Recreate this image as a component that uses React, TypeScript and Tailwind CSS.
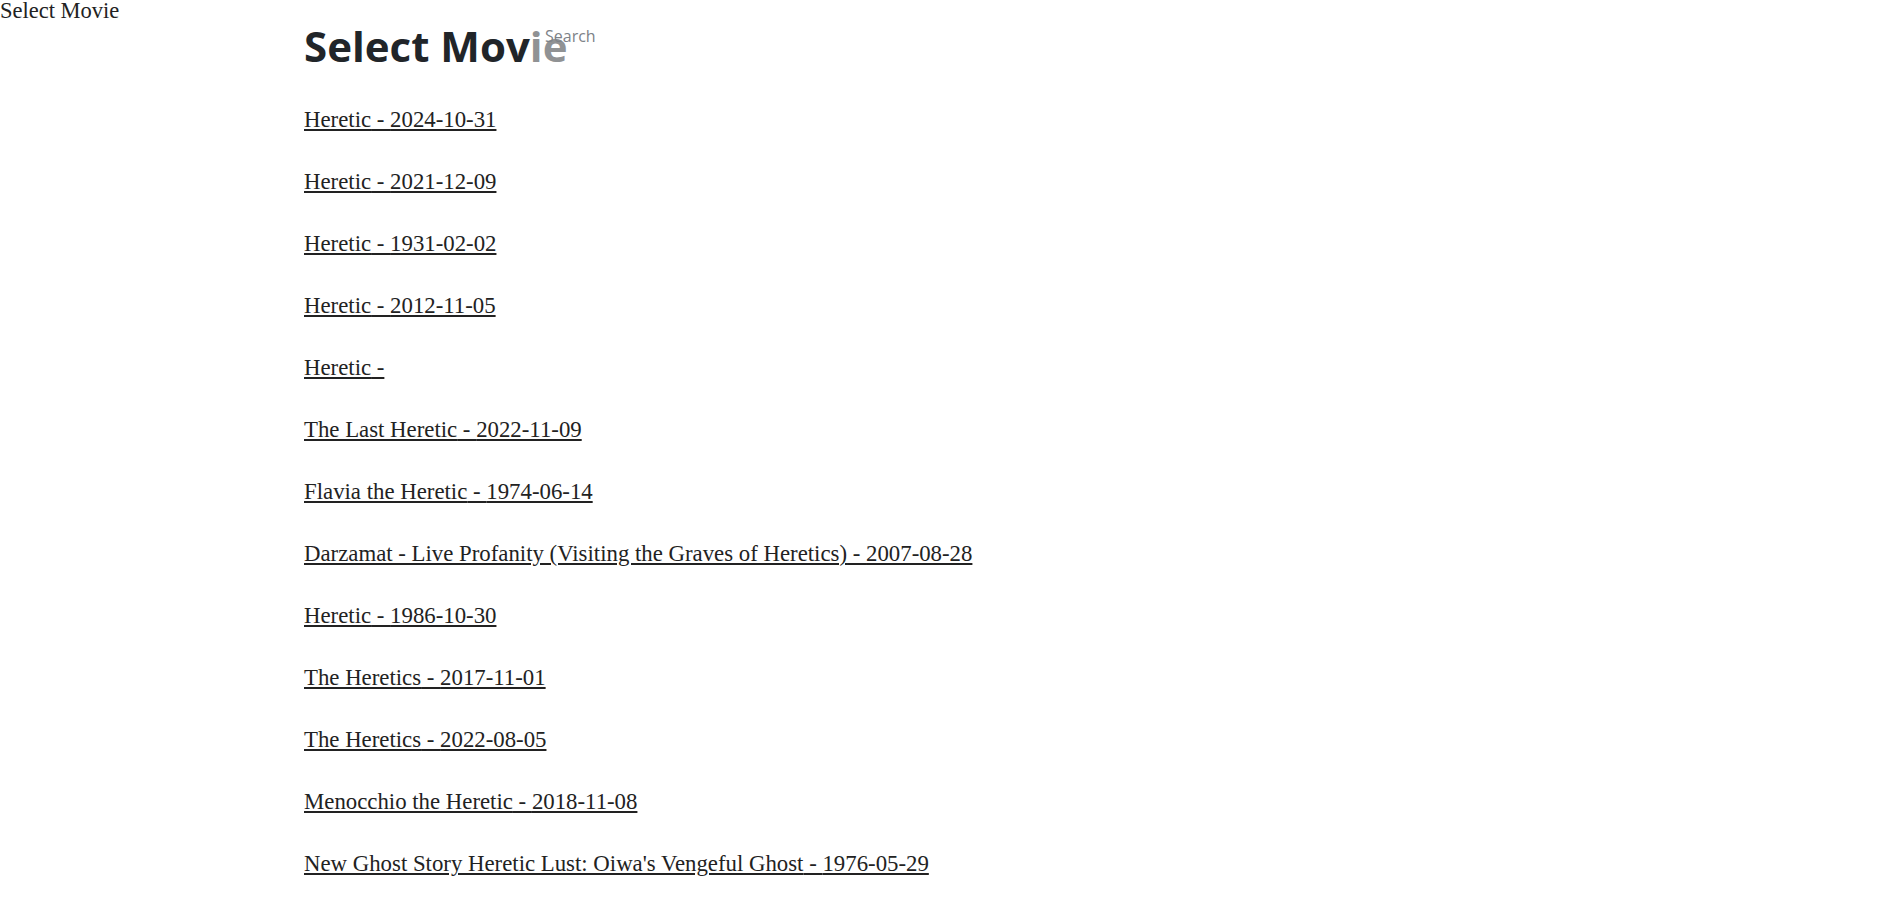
import React from 'react'

const movies = [
  { title: 'Heretic', date: '2024-10-31' },
  { title: 'Heretic', date: '2021-12-09' },
  { title: 'Heretic', date: '1931-02-02' },
  { title: 'Heretic', date: '2012-11-05' },
  { title: 'Heretic', date: '' },
  { title: 'The Last Heretic', date: '2022-11-09' },
  { title: 'Flavia the Heretic', date: '1974-06-14' },
  { title: 'Darzamat - Live Profanity (Visiting the Graves of Heretics)', date: '2007-08-28' },
  { title: 'Heretic', date: '1986-10-30' },
  { title: 'The Heretics', date: '2017-11-01' },
  { title: 'The Heretics', date: '2022-08-05' },
  { title: 'Menocchio the Heretic', date: '2018-11-08' },
  { title: "New Ghost Story Heretic Lust: Oiwa's Vengeful Ghost", date: '1976-05-29' },
]

export default function App() {
  return (
    <div className="min-h-screen bg-white text-[#212529] font-['Liberation_Serif',serif]">
      {/* Page title */}
      <div className="text-[22.5px] leading-[22px] text-[#222]">Select Movie</div>

      <main className="ml-[304px]">
        <div className="relative">
          <h1 className="font-['Open_Sans',sans-serif] text-[42px] leading-[48px] font-bold text-[#212529]">
            Select Movie
          </h1>
          {/* search box overlaps heading */}
          <div className="absolute left-[228px] top-0 w-[220px] h-[48px] bg-white/50">
            <input
              type="text"
              placeholder="Search"
              className="w-full bg-transparent pl-[13px] pt-[3px] font-['Open_Sans',sans-serif] text-[16px] leading-[22px] outline-none placeholder:text-[#7d8288]"
            />
          </div>
        </div>

        <ul className="mt-[35px] flex flex-col gap-[32px]">
          {movies.map((m, i) => (
            <li key={i} className="text-[22.8px] leading-[30px]">
              <a
                href="#"
                className="text-[#222] underline decoration-2 underline-offset-[2px]"
              >
                {m.title} - {m.date}
              </a>
            </li>
          ))}
        </ul>
      </main>
    </div>
  )
}
